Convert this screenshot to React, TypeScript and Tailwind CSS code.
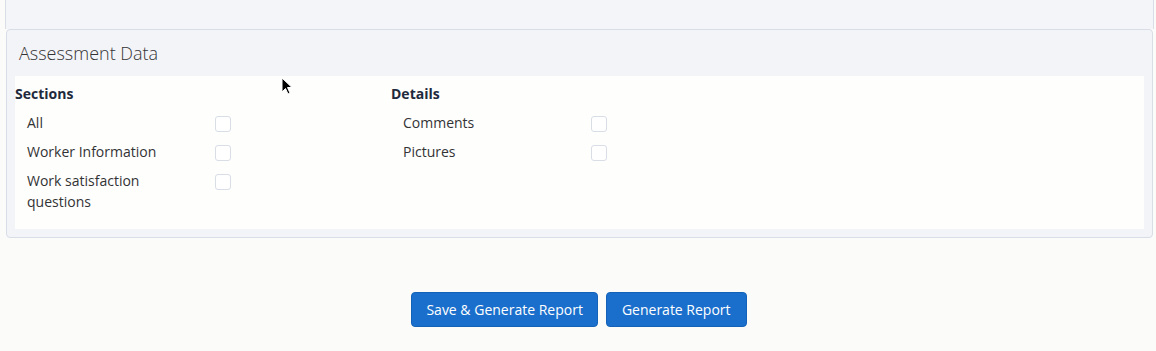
import React from "react";

const font = { fontFamily: '"Open Sans", "Liberation Sans", sans-serif' };

function Row({ label }: { label: string }) {
  return (
    <div className="flex items-start pl-3">
      <div className="w-[188px] text-[14px] leading-[21px] text-[#333335] pr-[20px]">{label}</div>
      <div className="mt-[4px] w-[16px] h-[16px] rounded-[3px] border border-[#d8dde6] bg-white" />
    </div>
  );
}

function Column({ title, items }: { title: string; items: string[] }) {
  return (
    <div className="w-[376px] flex flex-col">
      <div className="text-[14px] leading-[20px] font-bold text-[#1f2a3c]">{title}</div>
      <div className="mt-[8px] flex flex-col gap-[8px]">
        {items.map((i) => (
          <Row key={i} label={i} />
        ))}
      </div>
    </div>
  );
}

export default function App() {
  return (
    <div className="relative w-[1156px] h-[351px] bg-[#fbfbfa] overflow-hidden" style={font}>
      <div className="ml-[5px] mr-[2px] h-[29px] border-x border-[#d8dde6] bg-[#f4f5f9]" />
      <div className="ml-[6px] mr-[3px] rounded-[4px] border border-[#d8dde6] bg-[#f3f4f8] px-[8px] pb-[8px]">
        <div className="h-[46px] flex items-center pl-[4px] text-[18px] font-light text-[#333335]">
          Assessment Data
        </div>
        <div className="bg-[#fefefd] flex pt-[8px] pb-[17px]">
          <Column title="Sections" items={["All", "Worker Information", "Work satisfaction questions"]} />
          <Column title="Details" items={["Comments", "Pictures"]} />
        </div>
      </div>
      <div className="mt-[54px] flex justify-center gap-[8px] pl-[2px]">
        <button className="h-[35px] px-[14px] rounded-[4px] bg-[#1b6fcc] border border-[#1462b8] text-white text-[14px]">
          Save &amp; Generate Report
        </button>
        <button className="h-[35px] px-[15px] rounded-[4px] bg-[#1b6fcc] border border-[#1462b8] text-white text-[14px]">
          Generate Report
        </button>
      </div>
      <svg className="absolute left-[281px] top-[77px]" width="12" height="19" viewBox="0 0 12 19">
        <path d="M1 1 L1 15 L4.5 11.5 L7 17 L9 16 L6.5 10.5 L11 10.5 Z" fill="#000" stroke="#fff" strokeWidth="1" />
      </svg>
    </div>
  );
}
